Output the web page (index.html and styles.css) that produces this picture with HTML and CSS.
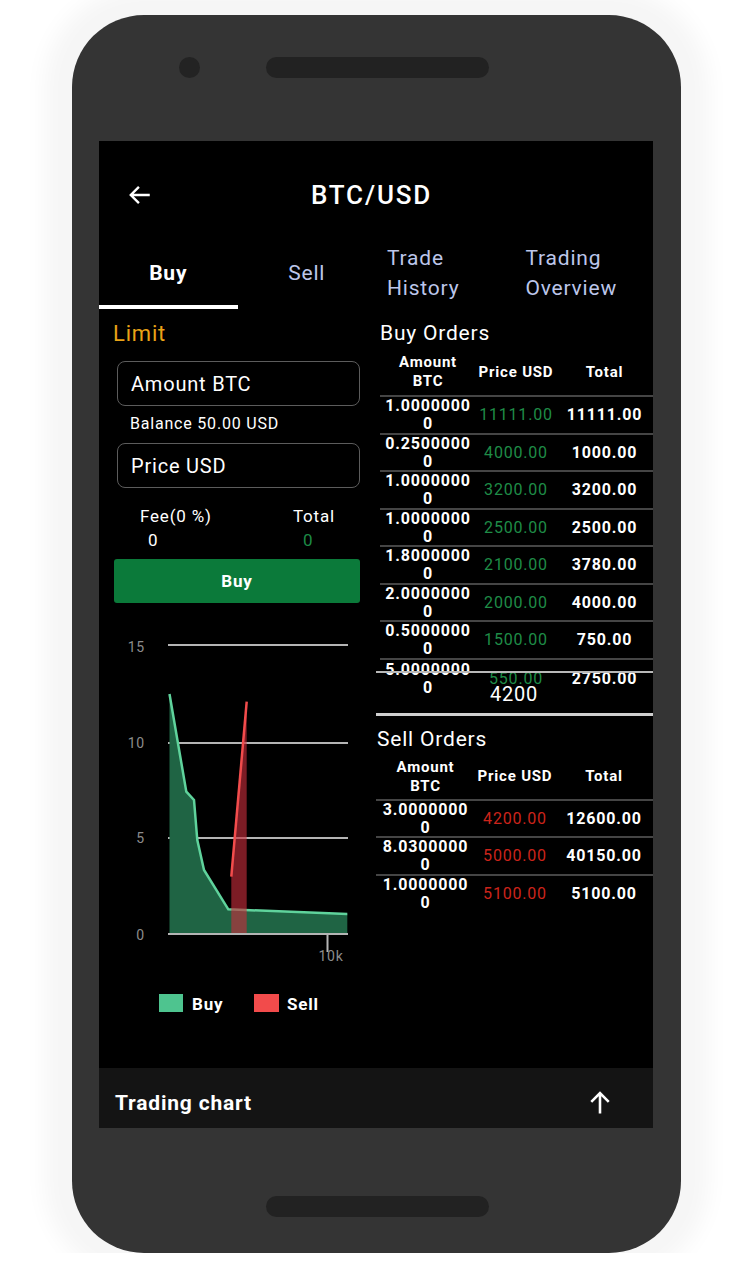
FILE: index.html
```html
<!DOCTYPE html>
<html lang="en">
<head>
    <meta charset="UTF-8">
    <meta name="viewport" content="width=device-width, initial-scale=1.0">
    <title>BTC/USD</title>
    <link rel="stylesheet" href="styles.css">
</head>
<body>
    <div class="phone">
        <div class="phone-top">
            <span class="camera"></span>
            <span class="speaker"></span>
        </div>

        <div class="screen">
            <div class="app-header">
                <svg class="back" width="26" height="26" viewBox="0 0 24 24">
                    <path d="M21 12H3.5M11 4.5L3.5 12l7.5 7.5" fill="none" stroke="#fff" stroke-width="2.2"/>
                </svg>
                <div class="app-title">BTC/USD</div>
            </div>

            <div class="tabs">
                <div class="tab active">Buy</div>
                <div class="tab">Sell</div>
                <div class="tab tab-multi">Trade<br>History</div>
                <div class="tab tab-multi">Trading<br>Overview</div>
            </div>

            <div class="content">
                <!-- 左侧 下单 -->
                <div class="left-col">
                    <div class="limit">Limit</div>
                    <div class="field">Amount BTC</div>
                    <div class="balance">Balance 50.00 USD</div>
                    <div class="field field-price">Price USD</div>
                    <div class="fee-row">
                        <div class="fee-col">
                            <div>Fee(0 %)</div>
                            <div class="fee-val">0</div>
                        </div>
                        <div class="fee-col">
                            <div>Total</div>
                            <div class="fee-val total-val">0</div>
                        </div>
                    </div>
                    <div class="buy-btn">Buy</div>

                    <svg class="depth" width="277" height="453" viewBox="0 0 277 453">
                        <g class="axis-label">
                            <text x="46" y="37" text-anchor="end">15</text>
                            <text x="46" y="133" text-anchor="end">10</text>
                            <text x="46" y="228" text-anchor="end">5</text>
                            <text x="46" y="325" text-anchor="end">0</text>
                        </g>
                        <g stroke="#b4b4b4" stroke-width="2">
                            <line x1="69" y1="30" x2="249" y2="30"/>
                            <line x1="69" y1="128" x2="249" y2="128"/>
                            <line x1="69" y1="223" x2="249" y2="223"/>
                        </g>
                        <polygon points="70.5,79 87.3,176.7 95,185 98.3,225 105,255 129.3,294.3 248.3,299 248.3,319 70.5,319" fill="#1f6444"/>
                        <polyline points="70.5,79 87.3,176.7 95,185 98.3,225 105,255 129.3,294.3 248.3,299" fill="none" stroke="#5fd39c" stroke-width="2.5"/>
                        <polygon points="132.3,261.7 147.7,86.7 147.7,319 132.3,319" fill="rgba(200,45,60,0.62)"/>
                        <line x1="132.3" y1="261.7" x2="147.7" y2="86.7" stroke="#f24c4c" stroke-width="2.5"/>
                        <line x1="69" y1="319" x2="249" y2="319" stroke="#b4b4b4" stroke-width="2"/>
                        <line x1="228.5" y1="319" x2="228.5" y2="337" stroke="#b4b4b4" stroke-width="2"/>
                        <text class="axis-label" x="232" y="346" text-anchor="middle">10k</text>

                        <rect x="60" y="379" width="24" height="18" fill="#4ec48f"/>
                        <text class="legend" x="93" y="395">Buy</text>
                        <rect x="155" y="379" width="25" height="18" fill="#f24b4b"/>
                        <text class="legend" x="188" y="395">Sell</text>
                    </svg>
                </div>

                <!-- 右侧 挂单 -->
                <div class="right-col">
                    <div class="orders-title">Buy Orders</div>
                    <div class="orders buy-orders">
                        <div class="orders-head">
                            <div>Amount<br>BTC</div>
                            <div>Price USD</div>
                            <div>Total</div>
                        </div>
                        <div class="orders-row">
                            <div><span class="amt">1.00000000</span></div>
                            <div class="price-buy">11111.00</div>
                            <div>11111.00</div>
                        </div>
                        <div class="orders-row">
                            <div><span class="amt">0.25000000</span></div>
                            <div class="price-buy">4000.00</div>
                            <div>1000.00</div>
                        </div>
                        <div class="orders-row">
                            <div><span class="amt">1.00000000</span></div>
                            <div class="price-buy">3200.00</div>
                            <div>3200.00</div>
                        </div>
                        <div class="orders-row">
                            <div><span class="amt">1.00000000</span></div>
                            <div class="price-buy">2500.00</div>
                            <div>2500.00</div>
                        </div>
                        <div class="orders-row">
                            <div><span class="amt">1.80000000</span></div>
                            <div class="price-buy">2100.00</div>
                            <div>3780.00</div>
                        </div>
                        <div class="orders-row">
                            <div><span class="amt">2.00000000</span></div>
                            <div class="price-buy">2000.00</div>
                            <div>4000.00</div>
                        </div>
                        <div class="orders-row">
                            <div><span class="amt">0.50000000</span></div>
                            <div class="price-buy">1500.00</div>
                            <div>750.00</div>
                        </div>
                        <div class="orders-row orders-last">
                            <div><span class="amt">5.00000000</span></div>
                            <div class="price-buy">550.00</div>
                            <div>2750.00</div>
                            <span class="glitch-line"></span>
                            <span class="glitch-text">4200</span>
                        </div>
                    </div>

                    <div class="divider"></div>

                    <div class="orders-title sell-title">Sell Orders</div>
                    <div class="orders sell-orders">
                        <div class="orders-head">
                            <div>Amount<br>BTC</div>
                            <div>Price USD</div>
                            <div>Total</div>
                        </div>
                        <div class="orders-row">
                            <div><span class="amt">3.00000000</span></div>
                            <div class="price-sell">4200.00</div>
                            <div>12600.00</div>
                        </div>
                        <div class="orders-row">
                            <div><span class="amt">8.03000000</span></div>
                            <div class="price-sell">5000.00</div>
                            <div>40150.00</div>
                        </div>
                        <div class="orders-row">
                            <div><span class="amt">1.00000000</span></div>
                            <div class="price-sell">5100.00</div>
                            <div>5100.00</div>
                        </div>
                    </div>
                </div>
            </div>

            <div class="bottom-bar">
                <span>Trading chart</span>
                <svg width="28" height="28" viewBox="0 0 24 24">
                    <path d="M12 21V3.5M4.5 11L12 3.5l7.5 7.5" fill="none" stroke="#fff" stroke-width="2.2"/>
                </svg>
            </div>
        </div>

        <div class="phone-bottom">
            <span class="speaker"></span>
        </div>
    </div>
</body>
</html>
```

FILE: styles.css
```css
* {
    box-sizing: border-box;
}

body {
    margin: 0px;
    background-color: #ffffff;
    font-family: Roboto, "Liberation Sans", sans-serif;
    color: #ffffff;
    letter-spacing: 0.05em;
}

.phone {
    width: 609px;
    height: 1238px;
    margin: 15px 0px 0px 72px;
    background-color: #343434;
    border-radius: 72px;
    box-shadow: 0px 0px 22px 28px #f6f6f6;
    display: flex;
    flex-direction: column;
}

.phone-top {
    height: 126px;
    display: flex;
    padding: 42px 0px 0px 107px;
}

.camera {
    width: 21px;
    height: 21px;
    margin-right: 66px;
    border-radius: 50%;
    background-color: #232323;
}

.speaker {
    width: 223px;
    height: 21px;
    border-radius: 11px;
    background-color: #222222;
}

.phone-bottom {
    display: flex;
    padding: 68px 0px 0px 194px;
}

.screen {
    width: 554px;
    height: 987px;
    margin-left: 27px;
    background-color: #000000;
    display: flex;
    flex-direction: column;
}

/* 顶部标题 */
.app-header {
    height: 100px;
    flex-shrink: 0;
    display: grid;
    grid-template-columns: 1fr auto 1fr;
    align-items: center;
    padding-top: 8px;
}

.back {
    margin-left: 28px;
}

.app-title {
    font-size: 26px;
    font-weight: 500;
    letter-spacing: 0.07em;
    margin-right: 9px;
}

/* 选项卡 */
.tabs {
    height: 68px;
    flex-shrink: 0;
    display: flex;
}

.tab {
    width: 25%;
    flex-shrink: 0;
    display: flex;
    align-items: center;
    justify-content: center;
    border-bottom: 4px solid transparent;
    font-size: 21px;
    line-height: 30px;
    color: #bcc6ea;
}

.tab.active {
    color: #ffffff;
    font-weight: 700;
    border-bottom-color: #ffffff;
}

.tab-multi {
    justify-content: flex-start;
    padding-left: 11px;
}

.content {
    flex: 1;
    display: flex;
}

/* 左侧 */
.left-col {
    width: 277px;
}

.limit {
    margin: 12px 0px 0px 14px;
    font-size: 22px;
    line-height: 26px;
    color: #e9a317;
}

.field {
    width: 243px;
    height: 45px;
    margin: 14px 0px 0px 18px;
    padding-left: 13px;
    display: flex;
    align-items: center;
    border: 1.5px solid #5c5c5c;
    border-radius: 8px;
    font-size: 20px;
}

.field-price {
    margin-top: 9px;
}

.balance {
    margin: 8px 0px 0px 31px;
    font-size: 16px;
    line-height: 20px;
}

.fee-row {
    display: grid;
    grid-template-columns: 153px auto;
    margin-top: 16px;
    padding-left: 41px;
    font-size: 17px;
    line-height: 24px;
}

.fee-val {
    padding-left: 8px;
}

.total-val {
    padding-left: 10px;
    color: #1d8a46;
}

.buy-btn {
    width: 246px;
    height: 44px;
    margin: 7px 0px 0px 15px;
    display: flex;
    align-items: center;
    justify-content: center;
    background-color: #0b7a3a;
    border-radius: 3px;
    font-size: 17px;
    font-weight: 700;
}

.depth {
    display: block;
    margin-top: 12px;
}

.axis-label {
    fill: #8c8c8c;
    font-size: 14px;
}

.legend {
    fill: #ffffff;
    font-size: 17px;
    font-weight: 700;
}

/* 右侧 挂单 */
.right-col {
    width: 277px;
}

.orders-title {
    margin: 12px 0px 0px 4px;
    font-size: 21px;
    line-height: 24px;
}

.sell-title {
    margin: 11px 0px 0px 1px;
}

.orders {
    font-size: 16px;
    font-weight: 700;
}

.buy-orders {
    margin-left: 4px;
}

.orders-head,
.orders-row {
    display: grid;
    grid-template-columns: 96px 80px 97px;
    text-align: center;
}

.sell-orders .orders-head,
.sell-orders .orders-row {
    grid-template-columns: 99px 80px 98px;
}

.orders-head {
    height: 50px;
    align-items: center;
    padding-top: 4px;
    font-size: 15px;
    line-height: 19px;
}

.sell-orders .orders-head {
    height: 48px;
}

.orders-row {
    height: 37.5px;
    align-items: center;
    border-top: 2px solid #454545;
    line-height: 18px;
}

.amt {
    display: block;
    width: 86px;
    margin: 0px auto;
    word-break: break-all;
}

.price-buy {
    color: #1f8c47;
    font-weight: 400;
}

.price-sell {
    color: #cc241b;
    font-weight: 400;
}

.orders-last {
    height: 40px;
    position: relative;
}

.glitch-line {
    position: absolute;
    left: -4px;
    top: 11px;
    width: 277px;
    height: 2px;
    background-color: #b8b8b8;
}

.glitch-text {
    position: absolute;
    left: 110px;
    top: 23px;
    font-size: 20px;
    font-weight: 400;
    line-height: 22px;
}

.divider {
    height: 3px;
    margin-top: 15px;
    background-color: #cfcfcf;
}

/* 底部 */
.bottom-bar {
    height: 60px;
    flex-shrink: 0;
    display: flex;
    align-items: center;
    justify-content: space-between;
    padding: 9px 39px 0px 16px;
    background-color: #141414;
    font-size: 21px;
    font-weight: 700;
}
```
